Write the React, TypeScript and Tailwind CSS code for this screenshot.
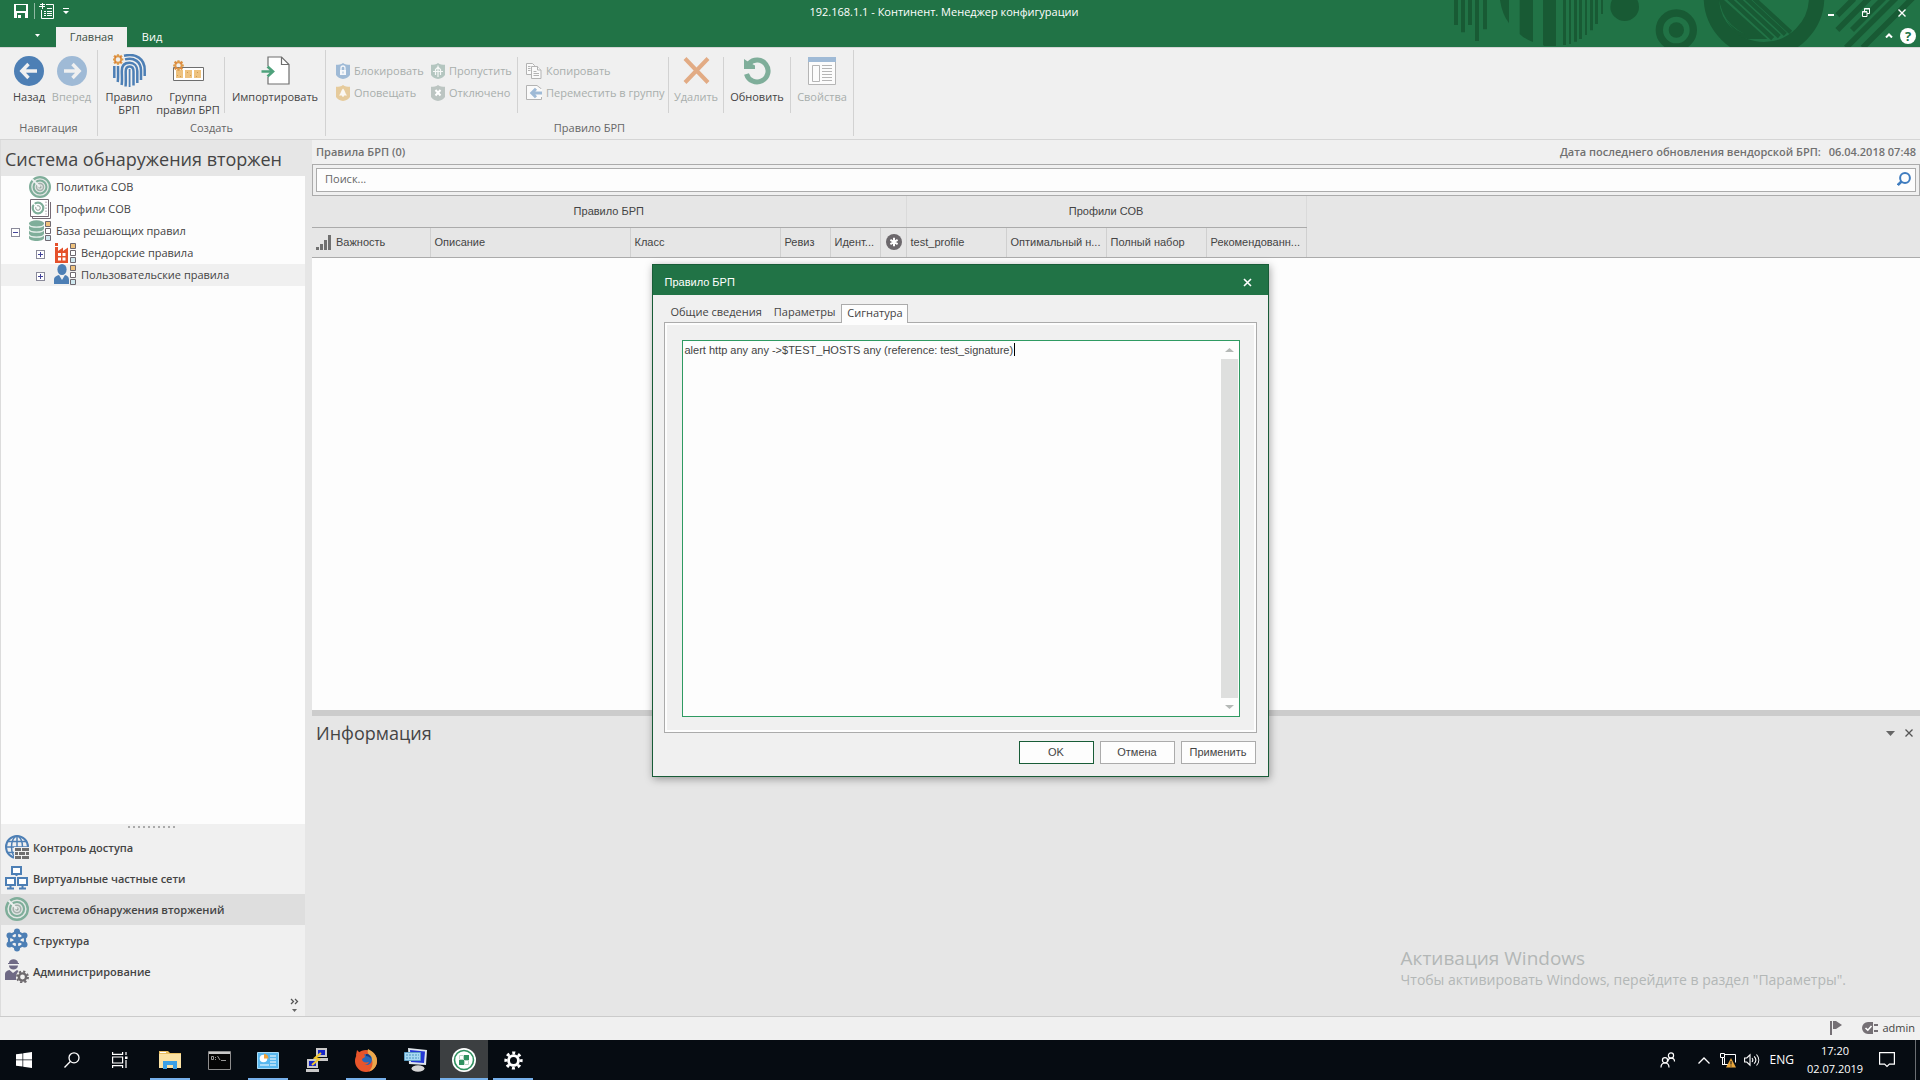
import React from "react";

type IconProps = { className?: string };

/* ---------- Title bar ---------- */

function HeaderPattern() {
  return (
    <svg className="absolute top-0 right-0 h-[47px] w-[500px]" viewBox="0 0 1500 141" fill="#185a34" aria-hidden="true">
      <path d="M102 0h12v75h-12zM123 0h12v97h-12zM144 0h12v75h-12zM165 0h12v123h-12zM189 0h12v88h-12z" />
      <path d="M240 0h27v70Q246 42 240 0z" />
      <path d="M299 0h40v126q-24-8-40-24zM369 0h39v138h-36l-3-4z" />
      <path d="M429 0h9v135h-9zM447 0h6v132h-6zM462 0h9v125h-9zM477 0h9v117h-9zM495 0h6v105h-6zM510 0h9v91h-9zM525 0h9v72h-9zM543 0h6v42h-6z" />
      <circle cx="614" cy="20" r="43" />
      <circle cx="769" cy="90" r="51" fill="none" stroke="#185a34" strokeWidth="22" />
      <circle cx="769" cy="90" r="23" />
      <circle cx="1032" cy="-9" r="158" fill="none" stroke="#185a34" strokeWidth="46" />
      <path d="M896 0h16l130 117-60 0q-40-6-74-80z" />
      <path d="M908 38q16 42 67 65-48-26-67-65z" fill="#217346" />
      <g stroke="#185a34" strokeWidth="13">
        <path d="M925 -6L1058 116M952 -6L1078 110M978 -6L1096 103M1000 -6L1112 97" />
      </g>
      <g stroke="#185a34" strokeWidth="17">
        <path d="M1252 46l50-50M1252 90l96-96M1296 90l96-96M1278 143l150-149M1328 143l150-149" />
      </g>
    </svg>
  );
}

function SaveIcon() {
  return (
    <svg className="h-[14px] w-[14px]" viewBox="0 0 14 14" aria-hidden="true">
      <path fill="#fff" fillRule="evenodd" d="M0 0h14v14H0zM2 1v6h10V1zM3 9v5h1v-3h3v3h4V9z" />
    </svg>
  );
}

function NewListIcon() {
  return (
    <svg className="h-4 w-4" viewBox="0 0 16 16" aria-hidden="true">
      <path fill="none" stroke="#fff" d="M7 1.500H14.500V15.500H2.500V7" />
      <path fill="#fff" d="M3 0h1v6H3zM0 3h6v1H0zM1 1h5v1H1zM5 8h2v1H5zM8 8h5v1H8zM5 10h2v1H5zM8 10h5v1H8zM5 12h2v1H5zM8 12h5v1H8zM8 5h5v1H8z" />
    </svg>
  );
}

function TitleBar() {
  return (
    <header className="relative flex h-[47px] shrink-0 flex-col bg-[#217346] text-white">
      <HeaderPattern />
      <div className="relative flex h-[27px] items-center">
        <div className="flex w-60 items-center pb-[5px] pl-[14px]">
          <button aria-label="Сохранить"><SaveIcon /></button>
          <span className="ml-[6px] h-4 w-px bg-[#8fb9a2]" />
          <button aria-label="Создать список" className="ml-1"><NewListIcon /></button>
          <button aria-label="Настройка панели" className="ml-2">
            <svg className="h-[6px] w-[6px]" viewBox="0 0 6 6" aria-hidden="true"><path fill="#fff" d="M0 0h6v1H0zM0 3h6L3 6z" /></svg>
          </button>
        </div>
        <h1 className="flex-1 pb-[3px] text-center text-[11px]">192.168.1.1 - Континент. Менеджер конфигурации</h1>
        <div className="flex w-[272px] items-center justify-end gap-7 pr-[14px] pb-[2px]">
          <button aria-label="Свернуть"><svg className="h-2 w-[6px]" viewBox="0 0 6 8"><path fill="#fff" d="M0 5h6v2H0z" /></svg></button>
          <button aria-label="Восстановить">
            <svg className="h-[9px] w-2" viewBox="0 0 8 9" fill="none" stroke="#fff"><path d="M.5 3.500h4.500v5H.5zM2.500 3.500V.5h5v5H5" /><path d="M0 4h5M2 1h6" /></svg>
          </button>
          <button aria-label="Закрыть"><svg className="h-2 w-2" viewBox="0 0 8 8" stroke="#fff" strokeWidth="1.400"><path d="M.5.5l7 7M7.500.5l-7 7" /></svg></button>
        </div>
      </div>
      <div className="relative flex flex-1 items-stretch text-[11px]">
        <button aria-label="Меню" className="flex w-14 items-center justify-end pr-4 pb-1">
          <svg className="h-[3px] w-[5px]" viewBox="0 0 5 3"><path fill="#fff" d="M0 0h5L2.500 3z" /></svg>
        </button>
        <button className="relative z-10 -mb-px w-[71px] bg-[#f0f0f0] text-[#3c4f45]">Главная</button>
        <button className="w-[50px]">Вид</button>
        <div className="ml-auto flex items-center gap-[7px] pr-1 pb-[3px]">
          <button aria-label="Свернуть ленту"><svg className="h-[5px] w-2" viewBox="0 0 8 5" fill="none" stroke="#fff" strokeWidth="2"><path d="M1 4.500L4 1.500l3 3" /></svg></button>
          <button aria-label="Справка" className="flex h-4 w-4 items-center justify-center rounded-full bg-white text-[13px] leading-4 font-bold text-[#217346]">?</button>
        </div>
      </div>
    </header>
  );
}

/* ---------- Ribbon icons ---------- */

function ArrowCircle({ color, flip }: { color: string; flip?: boolean }) {
  return (
    <svg className="h-[30px] w-[30px]" viewBox="0 0 30 30" aria-hidden="true">
      <circle cx="15" cy="15" r="15" fill={color} />
      <g transform={flip ? "rotate(180 15 15)" : undefined} fill="none" stroke="#f0f0f0" strokeWidth="3.400">
        <path d="M8 15h15M14.500 8L7.800 15l6.700 7" />
      </g>
    </svg>
  );
}

function Spark({ x, y }: { x: number; y: number }) {
  return (
    <g transform={`translate(${x} ${y})`}>
      <circle r="3.200" fill="none" stroke="#dd9a4a" strokeWidth="2" />
      <path stroke="#dd9a4a" strokeWidth="2.200" d="M0-5.300v2.400M0 5.300V2.900M-5.300 0h2.400M5.300 0H2.900M-3.900-3.900l1.700 1.700M3.900-3.900L2.200-2.200M-3.900 3.900l1.700-1.700M3.900 3.900L2.200 2.200" />
      <path fill="#e2572b" d="M-3-3h1v1h-1zM2-3h1v1H2zM-3 2h1v1h-1zM2 2h1v1H2z" />
    </g>
  );
}

function FingerprintIcon() {
  return (
    <svg className="h-[33px] w-[33px]" viewBox="0 0 33 33" aria-hidden="true">
      <g fill="none" stroke="#4d7fb5" strokeWidth="2.500">
        <path d="M11 1.800C23 -1.200 31.700 5 31.700 16v6" />
        <path d="M12 5.400C21.500 3 28 8 28 16.500V26" />
        <path d="M1.300 12v12M5 12c0 7 .4 12-.3 16M8.600 31c.8-4 .2-9 .2-14C8.800 11 12 8.800 16.500 8.800S24.300 12 24.300 17v12" />
        <path d="M12.600 32.500c.5-5 .1-10 .1-15 0-3 1.300-5 3.900-5s3.900 2 3.900 5v14" />
        <path strokeWidth="1.800" d="M16.600 15v18" />
      </g>
      <circle cx="5" cy="5.500" r="6" fill="#f0f0f0" />
      <Spark x={5} y={5.500} />
    </svg>
  );
}

function RuleGroupIcon() {
  return (
    <svg className="h-[33px] w-[33px]" viewBox="0 0 33 33" aria-hidden="true">
      <path fill="#fff" stroke="#6e6e6e" d="M1.500 13.500h30v13h-30z" />
      <path fill="#eec27e" d="M4 16h7v8H4zM13 16h7v8h-7zM22 16h7v8h-7z" />
      <path fill="#cf9a50" d="M5 21h1v1H5zM8 22h1v1H8zM15 18h1v1h-1zM18 21h1v1h-1zM25 18h1v1h-1zM24 22h1v1h-1z" />
      <Spark x={6.500} y={11.500} />
    </svg>
  );
}

function ImportIcon() {
  return (
    <svg className="h-[33px] w-[30px]" viewBox="0 0 30 33" aria-hidden="true">
      <path fill="#fff" stroke="#6e6e6e" strokeWidth="1.200" d="M8 3h13.500L29 10.500V30H8z" />
      <path fill="none" stroke="#6e6e6e" strokeWidth="1.200" d="M21.500 3v7.500H29" />
      <path fill="#f0f0f0" d="M5 12h2.400v11H5zM7 12h2v11H7z" />
      <path fill="none" stroke="#4ea17b" strokeWidth="2.600" d="M1.500 17.500h11M7.500 12.500l5.500 5-5.500 5" />
    </svg>
  );
}

function Shield({ color, children }: { color: string; children: React.ReactNode }) {
  return (
    <svg className="h-4 w-[14px]" viewBox="0 0 14 16" aria-hidden="true">
      <path fill={color} d="M7 0c2 1.600 4.200 1.800 7 1.800V12c-1.500 2.500-4 3.200-7 4-3-.8-5.500-1.500-7-4V1.800C2.800 1.800 5 1.600 7 0z" />
      {children}
    </svg>
  );
}

const LockShield = () => (
  <Shield color="#9fbad6"><path fill="#f5f7fa" d="M4 7h6v5H4z" /><path fill="none" stroke="#f5f7fa" strokeWidth="1.300" d="M5 7V5a2 2 0 014 0v2" /><path fill="#9fbad6" d="M6.500 8.500h1v2h-1z" /></Shield>
);
const BellShield = () => (
  <Shield color="#e6cb9c"><path fill="#fbf8f2" d="M7 3.500c2 2 2 4.500 4 7H8.200a1.200 1.200 0 01-2.400 0H3c2-2.500 2-5 4-7z" /></Shield>
);
const PassShield = () => (
  <Shield color="#b4c6c0"><path fill="none" stroke="#f5f7f6" strokeWidth="1.200" d="M7 2.500V14M2 8.500h10M4.500 12V6.500L7 4l2.500 2.500V12" /></Shield>
);
const OffShield = () => (
  <Shield color="#bcc5c2"><path stroke="#fff" strokeWidth="2" d="M4.500 5l5 5.500M9.500 5l-5 5.500" /></Shield>
);

function CopyIcon() {
  return (
    <svg className="h-4 w-4" viewBox="0 0 16 16" aria-hidden="true" fill="#fafafa" stroke="#b3b3b3">
      <path d="M.5.500h6l2 2v9h-8z" />
      <path d="M5.500 3.500h6L15 7v8.500H5.500z" />
      <path d="M11.500 3.500V7H15M7.500 8.500h3M7.500 10.500h5.500M7.500 12.500h5.500M2 3.500h2.500M2 5.500h2.500M2 7.500h2.500" />
    </svg>
  );
}

function MoveIcon() {
  return (
    <svg className="h-4 w-4" viewBox="0 0 16 16" aria-hidden="true">
      <path fill="#fafafa" stroke="#b3b3b3" d="M.5.5H11L15.500 4v10.500H.5z" />
      <path fill="#fafafa" d="M6 4h10v8H6z" />
      <path fill="none" stroke="#9fbad6" strokeWidth="3" d="M6 8h10M10 3.800L5.800 8l4.200 4.200" />
    </svg>
  );
}

function DeleteIcon() {
  return (
    <svg className="h-[30px] w-[27px]" viewBox="0 0 27 30" aria-hidden="true"><path stroke="#e2ab84" strokeWidth="4" d="M2 2.500l23 24M25 2.500l-23 24" /></svg>
  );
}

function RefreshIcon() {
  return (
    <svg className="h-[30px] w-[28px]" viewBox="0 0 28 30" aria-hidden="true">
      <path fill="none" stroke="#7fae9a" strokeWidth="5" d="M6 7.500A11 11 0 113.500 18" />
      <path fill="#7fae9a" d="M1 3l4.500 3L12 9.500V13H1z" />
    </svg>
  );
}

function PropertiesIcon() {
  return (
    <svg className="h-[30px] w-[28px]" viewBox="0 0 28 30" aria-hidden="true">
      <path fill="#fcfcfc" stroke="#b5b5b5" d="M.5 1.500h27v27H.5z" />
      <path fill="#9fbad6" d="M0 1h28v5H0z" />
      <path fill="none" stroke="#b5b5b5" d="M4.500 9.500h7v16h-7zM14 9.500h10M14 12.500h10M14 15.500h10M14 18.500h10M14 21.500h10M14 24.500h10" />
    </svg>
  );
}

/* ---------- Ribbon ---------- */

function BigButton({ icon, lines, className, disabled }: { icon: React.ReactNode; lines: string[]; className: string; disabled?: boolean }) {
  return (
    <button disabled={disabled} className={`flex flex-col items-center pt-[6px] ${disabled ? "text-[#a8aeac]" : "text-[#444]"} ${className}`}>
      <span className="flex h-[33px] items-center">{icon}</span>
      <span className="mt-[3px] flex flex-col items-center leading-[13px] whitespace-nowrap">
        {lines.map((l) => <span key={l}>{l}</span>)}
      </span>
    </button>
  );
}

function SmallButton({ icon, label }: { icon: React.ReactNode; label: string }) {
  return (
    <button disabled className="flex h-[22px] items-center gap-1 whitespace-nowrap text-[#a8aeac]">
      {icon}
      {label}
    </button>
  );
}

const Divider = () => <span className="mt-[9px] h-14 w-px shrink-0 bg-[#d2d2d2]" />;

function Group({ label, className, children }: { label: string; className?: string; children: React.ReactNode }) {
  return (
    <section className="flex flex-col border-r border-[#d2d2d2]">
      <div className={`-mt-[2px] flex h-[72px] items-start ${className ?? ""}`}>{children}</div>
      <h2 className="text-center leading-[15px] text-[#666]">{label}</h2>
    </section>
  );
}

function Ribbon() {
  return (
    <nav className="flex h-[93px] shrink-0 border-y border-[#d5d5d5] bg-[#f0f0f0] pt-[2px] pb-[3px] text-[11px]">
      <Group label="Навигация" className="pr-1 pl-2">
        <BigButton icon={<ArrowCircle color="#4d7fb5" />} lines={["Назад"]} className="w-[42px]" />
        <BigButton icon={<ArrowCircle color="#9fbad6" flip />} lines={["Вперед"]} className="w-[43px]" disabled />
      </Group>
      <Group label="Создать">
        <BigButton icon={<FingerprintIcon />} lines={["Правило", "БРП"]} className="w-[62px]" />
        <BigButton icon={<RuleGroupIcon />} lines={["Группа", "правил БРП"]} className="mr-2 w-[56px]" />
        <Divider />
        <BigButton icon={<ImportIcon />} lines={["Импортировать"]} className="w-[100px]" />
      </Group>
      <Group label="Правило БРП">
        <div className="flex w-[191px] gap-2 pt-3 pl-[10px]">
          <div className="w-[87px]"><SmallButton icon={<LockShield />} label="Блокировать" /><SmallButton icon={<BellShield />} label="Оповещать" /></div>
          <div><SmallButton icon={<PassShield />} label="Пропустить" /><SmallButton icon={<OffShield />} label="Отключено" /></div>
        </div>
        <Divider />
        <div className="w-[150px] pt-3 pl-2">
          <SmallButton icon={<CopyIcon />} label="Копировать" />
          <SmallButton icon={<MoveIcon />} label="Переместить в группу" />
        </div>
        <Divider />
        <BigButton icon={<DeleteIcon />} lines={["Удалить"]} className="w-[54px]" disabled />
        <Divider />
        <BigButton icon={<RefreshIcon />} lines={["Обновить"]} className="w-[66px]" />
        <Divider />
        <BigButton icon={<PropertiesIcon />} lines={["Свойства"]} className="w-[62px]" disabled />
      </Group>
    </nav>
  );
}

/* ---------- Sidebar ---------- */

function RadarIcon({ className }: IconProps) {
  return (
    <svg className={className} viewBox="0 0 24 24" aria-hidden="true">
      <circle cx="12" cy="12" r="10.800" fill="#e3e7e5" stroke="#7fae9a" strokeWidth="2.400" />
      <circle cx="12" cy="12" r="7" fill="none" stroke="#7fae9a" strokeWidth="2.200" />
      <circle cx="12" cy="12" r="3.800" fill="none" stroke="#a4b0ab" strokeWidth="1.600" />
      <circle cx="12" cy="12" r="1.700" fill="#9aa8a2" />
      <path stroke="#eef1f0" strokeWidth="2" d="M3.500 3.500L12 12" />
    </svg>
  );
}

function ProfilesIcon() {
  return (
    <svg className="h-[22px] w-[23px]" viewBox="0 0 23 22" aria-hidden="true">
      <path fill="#fff" stroke="#756b75" d="M3.500 3.500V20.500h18V4" />
      <path fill="#fff" stroke="#756b75" d="M1.500 1.500h18v17h-18z" />
      <circle cx="9" cy="10" r="5.300" fill="none" stroke="#7fae9a" strokeWidth="2.200" />
      <circle cx="9" cy="10" r="2.300" fill="none" stroke="#8a9a94" />
      <path stroke="#fff" strokeWidth="1.500" d="M4 5l4 4" />
      <path stroke="#9a929a" strokeDasharray="1.500 1.500" d="M17 3.500v13" />
    </svg>
  );
}

function Squares({ x }: { x: number }) {
  return (
    <g stroke="#6e6870">
      <path fill="#eec27e" d={`M${x} 1.500h5v5h-5z`} />
      <path fill="#fff" d={`M${x} 8.500h5v5h-5z`} />
      <path fill="#cfe8ef" d={`M${x} 15.500h5v5h-5z`} />
    </g>
  );
}

function DatabaseIcon() {
  return (
    <svg className="h-[22px] w-[23px]" viewBox="0 0 23 22" aria-hidden="true">
      <path fill="#7fae9a" d="M0 3v15c0 4 15 4 15 0V3z" />
      <ellipse cx="7.500" cy="3.300" rx="7.500" ry="3" fill="#7fae9a" />
      <g fill="none" stroke="#eaf2ee" strokeWidth="1.200"><path d="M0 4.500c1 3.600 14 3.600 15 0M0 9.500c1 3.600 14 3.600 15 0M0 14.500c1 3.600 14 3.600 15 0" /></g>
      <Squares x={16.500} />
    </svg>
  );
}

function FactoryIcon() {
  return (
    <svg className="h-[22px] w-[23px]" viewBox="0 0 23 22" aria-hidden="true">
      <path fill="#e5512b" d="M1 1h3v3H1zM1 5h3v4l5-3.500V9l5-3.500V21H1z" />
      <path fill="#fff" d="M4 11h3v3H4zM8.500 11h3v3h-3zM4 15.500h3v3H4zM8.500 15.500h3v3h-3z" />
      <Squares x={16.500} />
    </svg>
  );
}

function UserIcon() {
  return (
    <svg className="h-[22px] w-[23px]" viewBox="0 0 23 22" aria-hidden="true">
      <ellipse cx="8" cy="5.500" rx="4.600" ry="5.500" fill="#4d7fb5" />
      <path fill="#4d7fb5" d="M0 20v-4c0-3.500 3-4.500 5-5L8 16l3-5c2 .5 4 1.500 4 5v4z" />
      <Squares x={16.500} />
    </svg>
  );
}

function Expander({ open }: { open?: boolean }) {
  return (
    <svg className="h-[9px] w-[9px]" viewBox="0 0 9 9" aria-hidden="true" shapeRendering="crispEdges">
      <path fill="#fff" stroke="#8a8a9a" d="M.5.5h8v8h-8z" />
      <path stroke="#44449a" d={open ? "M2 4.500h5" : "M2 4.500h5M4.500 2v5"} />
    </svg>
  );
}

function TreeRow({ icon, label, level, state, selected }: { icon: React.ReactNode; label: string; level: 1 | 2; state?: "open" | "closed"; selected?: boolean }) {
  return (
    <li className={`flex h-[22px] items-center ${level === 1 ? "pl-[10px]" : "pl-[35px]"} ${selected ? "bg-[#f0f0f0]" : ""}`}>
      <span className="mt-[2px] w-[18px]">{state && <Expander open={state === "open"} />}</span>
      <span className="w-[27px]">{icon}</span>
      <span>{label}</span>
    </li>
  );
}

function GlobeWallIcon() {
  return (
    <svg className="h-6 w-6" viewBox="0 0 24 24" aria-hidden="true">
      <g fill="none" stroke="#4d7fb5" strokeWidth="2"><circle cx="12" cy="12" r="11" /><ellipse cx="12" cy="12" rx="5.500" ry="11" strokeWidth="1.500" /><path strokeWidth="1.500" d="M12 1v22M1 12h22M3 6.500h18M3 17.500h18" /></g>
      <path fill="#f0f0f0" d="M9 12h15v12H9z" />
      <path fill="#6e6e6e" d="M10 13h6v3h-6zM17 13h7v3h-7zM10 17h3v3h-3zM14 17h6v3h-6zM21 17h3v3h-3zM10 21h6v3h-6zM17 21h7v3h-7z" />
    </svg>
  );
}

function NetworkIcon() {
  return (
    <svg className="h-6 w-6" viewBox="0 0 24 24" aria-hidden="true" fill="#fff" stroke="#4d7fb5" strokeWidth="2">
      <path d="M7 1h9v7H7zM1 12h9v7H1zM13 12h9v7h-9zM11.500 8v2M5.500 19v3M17.500 19v3M2 22.500h7M14 22.500h7" />
    </svg>
  );
}

function StructureIcon() {
  return (
    <svg className="h-6 w-6" viewBox="0 0 24 24" aria-hidden="true" fill="#4d7fb5">
      <path fill="none" stroke="#4d7fb5" strokeWidth="2.200" d="M12 3.500l8 4.500v8l-8 4.500L4 16V8zM12 3v18M4 8l16 8M20 8L4 16" />
      <circle cx="12" cy="3.500" r="3" /><circle cx="12" cy="20.500" r="3" /><circle cx="4.500" cy="7.500" r="3" /><circle cx="19.500" cy="7.500" r="3" /><circle cx="4.500" cy="16.500" r="3" /><circle cx="19.500" cy="16.500" r="3" /><circle cx="12" cy="12" r="3.600" />
    </svg>
  );
}

function AdminIcon() {
  return (
    <svg className="h-6 w-6" viewBox="0 0 24 24" aria-hidden="true">
      <path fill="#6f6a85" d="M4 4c0-5 9-5 9 0zM4 6.500h9c0 5-9 5.500-9 0zM0 21v-5c0-3.500 2-4.500 4.500-5L8 14l4-3 1.500 1-2.500 4v5z" />
      <path stroke="#6f6a85" d="M3 4.500h11" />
      <g fill="none" stroke="#6e6a6e"><circle cx="17.500" cy="18" r="3.600" strokeWidth="2.400" /><circle cx="17.500" cy="18" r="5.500" strokeWidth="2" strokeDasharray="2.200 2.120" /></g>
    </svg>
  );
}

const sections: { label: string; icon: React.ReactNode; active?: boolean }[] = [
  { label: "Контроль доступа", icon: <GlobeWallIcon /> },
  { label: "Виртуальные частные сети", icon: <NetworkIcon /> },
  { label: "Система обнаружения вторжений", icon: <RadarIcon className="h-6 w-6" />, active: true },
  { label: "Структура", icon: <StructureIcon /> },
  { label: "Администрирование", icon: <AdminIcon /> },
];

function Sidebar() {
  return (
    <aside className="mr-[7px] flex w-[305px] shrink-0 flex-col border-l border-[#dcdcdc]">
      <h2 className="h-9 overflow-hidden pl-1 text-lg leading-[38px] whitespace-nowrap">Система обнаружения вторжен</h2>
      <ul className="min-h-0 flex-1 bg-[#fdfdfd]">
        <TreeRow level={1} label="Политика СОВ" icon={<RadarIcon className="h-[22px] w-[22px]" />} />
        <TreeRow level={1} label="Профили СОВ" icon={<ProfilesIcon />} />
        <TreeRow level={1} label="База решающих правил" icon={<DatabaseIcon />} state="open" />
        <TreeRow level={2} label="Вендорские правила" icon={<FactoryIcon />} state="closed" />
        <TreeRow level={2} label="Пользовательские правила" icon={<UserIcon />} state="closed" selected />
      </ul>
      <div className="bg-[#f0f0f0]">
        <div className="flex h-2 items-center justify-center gap-[3px] pr-1 pb-[2px]">
          {Array.from({ length: 10 }, (_, i) => <span key={i} className="h-[2px] w-[2px] bg-[#aaa]" />)}
        </div>
        {sections.map((s) => (
          <button key={s.label} className={`flex h-[31px] w-full items-center gap-1 pb-px pl-1 text-left font-semibold ${s.active ? "bg-[#dedede]" : ""}`}>
            {s.icon}
            <span className="pt-[2px]">{s.label}</span>
          </button>
        ))}
        <div className="flex h-[29px] justify-end pt-[6px] pr-[6px]">
          <button aria-label="Настроить кнопки">
            <svg className="h-[14px] w-[9px]" viewBox="0 0 9 14" aria-hidden="true"><path fill="none" stroke="#555" strokeWidth="1.300" d="M1 1l2.500 2.500L1 6M5 1l2.500 2.500L5 6" /><path fill="#666" d="M2 11h5l-2.500 3z" /></svg>
          </button>
        </div>
      </div>
    </aside>
  );
}

/* ---------- Rules list ---------- */

const columns = [
  { label: "Важность", col: "w-[118px]" },
  { label: "Описание", col: "w-[200px]" },
  { label: "Класс", col: "w-[150px]" },
  { label: "Ревиз", col: "w-[50px]" },
  { label: "Идент...", col: "w-[50px]" },
  { label: "", col: "w-[26px]" },
  { label: "test_profile", col: "w-[100px]" },
  { label: "Оптимальный н...", col: "w-[100px]" },
  { label: "Полный набор", col: "w-[100px]" },
  { label: "Рекомендованн...", col: "w-[100px]" },
];

function RulesTable() {
  return (
    <div className="border-b border-[#ababab]">
      <table className="w-[994px] table-fixed border-collapse font-[Liberation_Sans,sans-serif] text-[11px]">
        <colgroup>{columns.map((c, i) => <col key={i} className={c.col} />)}</colgroup>
        <thead>
          <tr className="h-[31px]">
            <th colSpan={6} className="border-r border-b border-r-[#dadada] border-b-[#ababab] font-normal">Правило БРП</th>
            <th colSpan={4} className="border-r border-b border-r-[#dadada] border-b-[#ababab] font-normal">Профили СОВ</th>
          </tr>
          <tr className="h-[30px]">
            {columns.map((c, i) => (
              <th key={i} aria-label={c.label || "Профиль"} className={`border-r border-[#d0d0d0] p-0 text-left font-normal whitespace-nowrap ${i === 5 ? "pl-[5px]" : "pl-1"}`}>
                <span className="flex items-center gap-[5px]">
                  {i === 0 && <svg className="h-[15px] w-[15px]" viewBox="0 0 15 15" fill="#707070"><path d="M0 12h3v3H0zM4 9h3v6H4zM8 5h3v10H8zM12 0h3v15h-3z" /></svg>}
                  {i === 5 && (
                    <svg className="h-4 w-4" viewBox="0 0 16 16"><circle cx="8" cy="8" r="8" fill="#6c686c" /><path stroke="#fff" strokeWidth="2" d="M8 3.800v8.400M4.400 5.900l7.200 4.200M11.600 5.900l-7.200 4.200" /></svg>
                  )}
                  {c.label}
                </span>
              </th>
            ))}
          </tr>
        </thead>
      </table>
    </div>
  );
}

function Workspace() {
  return (
    <main className="flex min-w-0 flex-1 flex-col">
      <div className="flex h-6 items-center justify-between bg-[#f0f0f0] pr-1 pl-1 font-semibold text-[#707070]">
        <h2>Правила БРП (0)</h2>
        <p>Дата последнего обновления вендорской БРП: <span className="ml-[5px]">06.04.2018 07:48</span></p>
      </div>
      <div className="flex h-8 shrink-0 border border-[#ababab] bg-[#f0f0f0] p-[3px]">
        <div className="flex flex-1 items-center border border-[#ababab] bg-[#fdfdfd] pr-1 pb-[2px] pl-2">
          <input aria-label="Поиск" placeholder="Поиск..." className="flex-1 bg-transparent outline-none placeholder:text-[#666]" />
          <button aria-label="Найти">
            <svg className="h-[14px] w-[14px]" viewBox="0 0 14 14" fill="none" stroke="#3f7cbf"><circle cx="8" cy="6" r="4.900" strokeWidth="2" /><path strokeWidth="2.600" d="M4.500 9.500L.8 13" /></svg>
          </button>
        </div>
      </div>
      <RulesTable />
      <div className="min-h-0 flex-1 bg-[#fdfdfd]" />
      <div className="h-[6px] shrink-0 bg-[#cccccc]" />
      <section className="relative h-[300px] shrink-0">
        <div className="flex h-[34px] items-center justify-between pr-[7px] pl-1">
          <h2 className="text-lg leading-6">Информация</h2>
          <div className="flex items-center gap-[10px]">
            <button aria-label="Свернуть панель"><svg className="h-[5px] w-[9px]" viewBox="0 0 9 5"><path fill="#666" d="M0 0h9L4.500 5z" /></svg></button>
            <button aria-label="Закрыть панель"><svg className="h-2 w-2" viewBox="0 0 8 8" stroke="#555" strokeWidth="1.300"><path d="M.5.5l7 7M7.500.5l-7 7" /></svg></button>
          </div>
        </div>
        <div className="absolute right-[74px] bottom-[26px] text-[#b3b7b6]">
          <p className="text-[19px] leading-6">Активация Windows</p>
          <p className="text-sm leading-5 whitespace-nowrap">Чтобы активировать Windows, перейдите в раздел "Параметры".</p>
        </div>
      </section>
    </main>
  );
}

/* ---------- Dialog ---------- */

function Dialog() {
  const button = "h-[23px] w-[75px] border bg-[#fdfdfd] pt-px font-[Liberation_Sans,sans-serif]";
  return (
    <div className="pointer-events-none absolute inset-0 flex items-center justify-center">
      <div role="dialog" aria-labelledby="dialog-title" className="pointer-events-auto flex h-[513px] w-[617px] flex-col border border-[#185c37] bg-[#f0f0f0] text-[11px] shadow-[1px_2px_8px_rgba(0,0,0,0.35)]">
        <div className="flex h-[30px] items-center justify-between bg-[#217346] pt-[6px] pr-4 pl-3 text-white">
          <h2 id="dialog-title" className="font-[Liberation_Sans,sans-serif]">Правило БРП</h2>
          <button aria-label="Закрыть окно"><svg className="h-[9px] w-[9px]" viewBox="0 0 9 9" stroke="#fff" strokeWidth="1.600"><path d="M1 1l7 7M8 1l-7 7" /></svg></button>
        </div>
        <div role="tablist" className="flex h-[27px] items-end pl-[18px]">
          <button role="tab" className="h-[18px] pb-[2px] leading-4">Общие сведения</button>
          <button role="tab" className="ml-3 h-[18px] pb-[2px] leading-4">Параметры</button>
          <button role="tab" aria-selected="true" className="relative z-10 -mb-px ml-[6px] h-[19px] w-[67px] border border-b-0 border-[#ababab] bg-[#fdfdfd]">Сигнатура</button>
        </div>
        <div className="mx-[11px] flex flex-1 border border-[#ababab] bg-[#fdfdfd] p-[2px]">
          <div className="flex flex-1 bg-[#f0f0f0] pt-[15px] pr-[14px] pb-[13px] pl-[15px]">
            <div className="relative flex flex-1 border border-[#2f9a62] bg-[#fdfdfd]">
              <textarea aria-label="Сигнатура" spellCheck={false} className="flex-1 resize-none bg-transparent px-[2px] pt-px font-[Liberation_Sans,sans-serif] leading-4 outline-none" defaultValue="alert http any any ->$TEST_HOSTS any (reference: test_signature)" />
              <span className="absolute top-[2px] left-[331px] h-[13px] w-px bg-black" />
              <div className="mr-px flex w-[17px] flex-col items-center" aria-hidden="true">
                <svg className="my-[7px] h-1 w-[9px] shrink-0" viewBox="0 0 9 4"><path fill="#b5b9b7" d="M0 4h9L4.500 0z" /></svg>
                <span className="w-full flex-1 bg-[#dedfde]" />
                <svg className="my-[7px] h-1 w-[9px] shrink-0" viewBox="0 0 9 4"><path fill="#b5b9b7" d="M0 0h9L4.500 4z" /></svg>
              </div>
            </div>
          </div>
        </div>
        <div className="mr-3 flex h-[43px] items-start justify-end gap-[6px] pt-2">
          <button className={`${button} border-[#185c37]`}>OK</button>
          <button className={`${button} border-[#ababab]`}>Отмена</button>
          <button className={`${button} border-[#ababab]`}>Применить</button>
        </div>
      </div>
    </div>
  );
}

/* ---------- Status bar ---------- */

function StatusBar() {
  return (
    <footer className="flex h-6 shrink-0 items-center justify-end border-t border-[#cbcbcb] bg-[#f0f0f0] pr-[5px] pb-px text-[11px]">
      <svg className="h-[14px] w-3" viewBox="0 0 12 14" aria-hidden="true" fill="#757075"><path d="M0 0h2v14H0zM3 0h3l6 4-6 4H3z" /></svg>
      <svg className="mr-1 ml-5 h-3 w-4" viewBox="0 0 16 12" aria-hidden="true"><path fill="#757075" d="M6 0h5v12H6A6 6 0 016 0zM12 2h4v2h-4zM12 8h4v2h-4z" /><path fill="none" stroke="#fff" strokeWidth="1.600" d="M3.500 6l2.300 2.200L9.500 4" /></svg>
      <span className="text-[11px]">admin</span>
    </footer>
  );
}

/* ---------- Taskbar ---------- */

const StartIcon = () => (
  <svg className="h-4 w-4" viewBox="0 0 16 16" fill="#fff"><path d="M0 2.300L6.500 1.400v6.200H0zM7.200 1.300L16 0v7.600H7.200zM0 8.300h6.500v6.300L0 13.700zM7.200 8.300H16V16l-8.800-1.300z" /></svg>
);
const SearchIcon = () => (
  <svg className="h-4 w-4" viewBox="0 0 16 16" fill="none" stroke="#fff" strokeWidth="1.300"><circle cx="10" cy="5.800" r="5" /><path d="M6.300 9.500L.5 15.500" /></svg>
);
const TaskViewIcon = () => (
  <svg className="h-4 w-4" viewBox="0 0 16 16" fill="none" stroke="#fff" strokeWidth="1.200"><path d="M.6 0v2.400h10V0M.6 16v-2.400h10V16M.6 5h10v6H.6zM14 0v3M14 8v8" /><path fill="#fff" stroke="none" d="M13 4.500h2.500v2.500H13z" /></svg>
);
const ExplorerIcon = () => (
  <svg className="h-5 w-[22px]" viewBox="0 0 22 20"><path fill="#e9bf62" d="M0 1h9l2 2h11v15H0z" /><path fill="#fbe2a3" d="M0 4h22v14H0z" /><path fill="#fff" d="M1 2h6v1H1z" /><path fill="#3aa0e6" d="M4 19v-8h14v8h-4v-4H8v4z" /></svg>
);
const TerminalIcon = () => (
  <svg className="h-[19px] w-[23px]" viewBox="0 0 23 19"><path fill="#050505" stroke="#8d8d8d" d="M.5.5h22v18H.5z" /><path fill="#c8c8c8" d="M1 1h21v2H1z" /><path fill="none" stroke="#bbb" strokeWidth=".8" d="M3.500 5.500h2v3h-2zM7.500 6v1M7.500 8v1M9.500 5l2.500 4M13 9.500h5" /></svg>
);
const ControlPanelIcon = () => (
  <svg className="h-[17px] w-[22px]" viewBox="0 0 22 17"><path fill="#59b8ef" stroke="#a9dcf7" d="M.5.5h21v16H.5z" /><circle cx="6.500" cy="6.500" r="3.800" fill="#fff" /><path fill="#f0a23a" d="M7 1.800v4.700h4.500A4.600 4.600 0 007 1.800z" /><path stroke="#fff" strokeWidth="1.200" d="M13 4h6M13 7h6M13 10h6M3 13h9M13 13h6" /></svg>
);
const PuttyIcon = () => (
  <svg className="h-6 w-[22px]" viewBox="0 0 22 24"><path fill="#c9c9c9" d="M10 0h11v9H10zM9 10h13v3H9zM1 11h11v9H1zM0 21h13v3H0z" /><path fill="#1626c8" d="M12 2h7v5h-7zM3 13h7v5H3z" /><path fill="none" stroke="#f0c62f" strokeWidth="2" d="M15 5l-6 5 4 1-7 6" /></svg>
);
const FirefoxIcon = () => (
  <svg className="h-[23px] w-[22px]" viewBox="0 0 22 23"><circle cx="11" cy="12" r="11" fill="#e8552b" /><path fill="#eba94c" d="M13 0c6 3 9 7 9 12s-3 9-8 10.500C18 18 19 12 15 7c-2-2-3-4-2-7z" /><circle cx="11.500" cy="10.500" r="5.500" fill="#2867b8" /><path fill="#e8552b" d="M1 6l1-5 4 4c3 0 4 1 4 3l-3 2c0 3 3 4 7 3-2 4-8 4-10 0z" /><path fill="#183a7c" d="M11 5c3 0 5 2 5 5-1-2-3-3-5-3z" /></svg>
);
const RemoteIcon = () => (
  <svg className="h-6 w-[23px]" viewBox="0 0 23 24"><path fill="#dfe6ec" d="M4 0l19 2-1 15-17-1z" /><path fill="#2438d4" d="M6 2l15 1.500-1 11.500L7 14z" /><path fill="#a8daf2" stroke="#5f9fc4" d="M.5 4.500h16v8H.5z" /><path stroke="#4c93c0" strokeDasharray="2 1" d="M2 7h13M2 10h13" /><ellipse cx="14" cy="20.500" rx="6.500" ry="3.200" fill="#d5d5d5" /></svg>
);
const ContinentIcon = () => (
  <svg className="h-6 w-6" viewBox="0 0 24 24"><circle cx="12" cy="12" r="12" fill="#fff" /><circle cx="12" cy="12" r="9.500" fill="none" stroke="#2f9160" strokeWidth="1.600" /><path fill="#2f9160" d="M12 7h5v5h-5zM7 12h5v5H7z" /><path fill="none" stroke="#b9d8c8" d="M7.500 7.500h4v4h-4zM12.500 12.500h4v4h-4z" /></svg>
);
const GearIcon = () => (
  <svg className="h-[19px] w-[19px]" viewBox="0 0 20 20" fill="none" stroke="#fff"><circle cx="10" cy="10" r="5.200" strokeWidth="3" /><circle cx="10" cy="10" r="8" strokeWidth="3.200" strokeDasharray="3.140 3.143" strokeDashoffset="1.570" /></svg>
);

const tasks: { name: string; icon: React.ReactNode; running?: boolean; active?: boolean }[] = [
  { name: "Проводник", icon: <ExplorerIcon />, running: true },
  { name: "Командная строка", icon: <TerminalIcon /> },
  { name: "Панель управления", icon: <ControlPanelIcon />, running: true },
  { name: "Терминал", icon: <PuttyIcon /> },
  { name: "Браузер", icon: <FirefoxIcon />, running: true },
  { name: "Удалённый рабочий стол", icon: <RemoteIcon /> },
  { name: "Менеджер конфигурации", icon: <ContinentIcon />, active: true },
  { name: "Параметры", icon: <GearIcon />, running: true },
];

function Taskbar() {
  const square = "flex h-10 w-12 items-center justify-center";
  return (
    <div className="flex h-10 shrink-0 items-center bg-[#060c12] text-xs text-white">
      <button aria-label="Пуск" className={square}><StartIcon /></button>
      <button aria-label="Поиск в системе" className={square}><SearchIcon /></button>
      <button aria-label="Представление задач" className={square}><TaskViewIcon /></button>
      <div className="ml-[2px] flex gap-px">
        {tasks.map((t) => (
          <button key={t.name} aria-label={t.name} className={`relative ${square} ${t.active ? "bg-[#3c3f41]" : ""}`}>
            {t.icon}
            {t.running && <span className="absolute inset-x-1 bottom-0 h-[2px] bg-[#76b0ea]" />}
            {t.active && <span className="absolute inset-x-0 bottom-0 h-[2px] bg-[#76b0ea]" />}
          </button>
        ))}
      </div>
      <div className="ml-auto flex h-full items-center">
        <svg className="h-4 w-4" viewBox="0 0 16 16" fill="none" stroke="#fff" strokeWidth="1.200"><circle cx="11" cy="3.500" r="2.600" /><path d="M8 9.500c0-4.500 6.500-4.500 6.500 0" /><circle cx="5" cy="8.300" r="2.600" /><path d="M1 15.500c0-6 8-6 8 0" /></svg>
        <svg className="ml-[22px] h-[7px] w-3" viewBox="0 0 12 7" fill="none" stroke="#fff" strokeWidth="1.300"><path d="M.5 6.500L6 1l5.500 5.500" /></svg>
        <svg className="ml-[10px] h-4 w-4" viewBox="0 0 16 16" fill="none" stroke="#fff"><path d="M5 2.500h10.500v8M4.500 6v6.500H9M2 12.500h3M.5 1.500h4v4h-4zM2.500 5.500V13" /><path fill="#e7a63c" stroke="none" d="M11 6l5 9.500H6z" /><path stroke="#111" d="M11 9v3.500M11 13.500v1" /></svg>
        <svg className="ml-2 h-[14px] w-4" viewBox="0 0 16 14" fill="none" stroke="#fff" strokeWidth="1.100"><path d="M.6 5h2.200L6 1.800v10.400L2.800 9H.6zM8 5c1 1.200 1 2.800 0 4M10.200 3.300c2 2.200 2 5.200 0 7.400M12.500 1.500c3 3.300 3 7.700 0 11" /></svg>
        <span className="ml-[10px]">ENG</span>
        <div className="ml-3 flex w-[58px] flex-col items-center text-[11px] leading-[18px]"><span>17:20</span><span>02.07.2019</span></div>
        <svg className="ml-[15px] h-4 w-4" viewBox="0 0 16 16" fill="none" stroke="#fff" strokeWidth="1.200"><path d="M.6.6h14.800v11.500h-5L8 14.500l-2.400-2.400h-5z" /></svg>
        <span className="mr-1 ml-5 h-full w-px bg-[#6a6e72]" />
      </div>
    </div>
  );
}

export default function App() {
  return (
    <div className="flex h-screen min-h-[900px] w-full flex-col overflow-hidden bg-[#e6e6e6] font-[Open_Sans,sans-serif] text-[11px] text-[#444]">
      <div className="relative flex min-h-0 flex-1 flex-col">
        <TitleBar />
        <Ribbon />
        <div className="flex min-h-0 flex-1">
          <Sidebar />
          <Workspace />
        </div>
        <StatusBar />
        <Dialog />
      </div>
      <Taskbar />
    </div>
  );
}
